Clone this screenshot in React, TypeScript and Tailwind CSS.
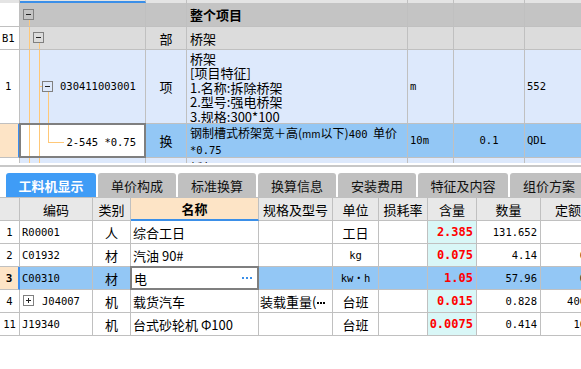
import React from 'react';

const mono = "font-['DejaVu_Sans_Mono','Noto_Sans_CJK_SC',monospace] text-[10.5px]";
const topCols = 'grid grid-cols-[20px_126px_41px_221px_46px_71px_57px]';
const botCols = 'grid grid-cols-[20px_73px_38px_128px_74px_46px_49px_49px_64px_68px]';
const cell = 'border-r border-b border-[#c0c0c0] relative overflow-hidden';

function Box({ plus, className }: { plus?: boolean; className: string }) {
  return (
    <span className={`absolute w-[11px] h-[11px] border border-[#808080] flex items-center justify-center ${className}`}>
      <span className="w-[5px] h-px bg-[#222]" />
      {plus && <span className="absolute w-px h-[5px] bg-[#222]" />}
    </span>
  );
}

function Dots() {
  return (
    <span className="flex gap-[2px]">
      <span className="w-[2px] h-[2px] bg-[#3b8fe8]" />
      <span className="w-[2px] h-[2px] bg-[#3b8fe8]" />
      <span className="w-[2px] h-[2px] bg-[#3b8fe8]" />
    </span>
  );
}

function TopGrid() {
  return (
    <div className="h-[163px] overflow-hidden">
      {/* header strip */}
      <div className={`${topCols} h-[3px]`}>
        <div className="bg-[#e4e4e4] border-r border-[#c0c0c0]" />
        <div className="bg-[#e4e4e4] border-r border-[#c0c0c0] border-b-2 border-b-[#3b8fe8]" />
        <div className="bg-[#e4e4e4] border-r border-[#c0c0c0]" />
        <div className="bg-[#e4e4e4] border-r border-[#c0c0c0]" />
        <div className="bg-[#e4e4e4] border-r border-[#c0c0c0]" />
        <div className="bg-[#e4e4e4] border-r border-[#c0c0c0]" />
        <div className="bg-[#e4e4e4]" />
      </div>

      {/* 整个项目 */}
      <div className={`${topCols} h-[24px] bg-[#c4c4c4]`}>
        <div className={`${cell} bg-white`} />
        <div className={cell}>
          <Box className="left-[3px] top-[6px]" />
          <span className="absolute left-[9px] top-[17px] bottom-0 w-px bg-[#ffc878]" />
        </div>
        <div className={cell} />
        <div className={`${cell} flex items-center pl-[3px] font-bold`}>整个项目</div>
        <div className={cell} />
        <div className={cell} />
        <div className={cell} />
      </div>

      {/* B1 */}
      <div className={`${topCols} h-[23px] bg-[#dcdcdc]`}>
        <div className={`${cell} bg-white flex items-center pl-[2px] ${mono}`}>B1</div>
        <div className={cell}>
          <span className="absolute left-[9px] top-0 bottom-0 w-px bg-[#ffc878]" />
          <Box className="left-[13px] top-[5px]" />
          <span className="absolute left-[19px] top-[16px] bottom-0 w-px bg-[#ffc878]" />
        </div>
        <div className={`${cell} flex items-center justify-center`}>部</div>
        <div className={`${cell} flex items-center pl-[3px]`}>桥架</div>
        <div className={cell} />
        <div className={cell} />
        <div className={cell} />
      </div>

      {/* 030411003001 */}
      <div className={`${topCols} h-[74px] bg-[#dde9fc]`}>
        <div className={`${cell} bg-white flex items-center pl-[5px] ${mono}`}>1</div>
        <div className={cell}>
          <span className="absolute left-[9px] top-0 bottom-0 w-px bg-[#ffc878]" />
          <span className="absolute left-[19px] top-0 bottom-0 w-px bg-[#ffc878]" />
          <span className="absolute left-[19px] top-[36px] w-[4px] h-px bg-[#ffc878]" />
          <Box className="left-[22px] top-[31px]" />
          <span className="absolute left-[28px] top-[42px] bottom-0 w-px bg-[#ffc878]" />
          <span className={`absolute left-[40px] top-[30px] ${mono} leading-[13px]`}>030411003001</span>
        </div>
        <div className={`${cell} flex items-center justify-center`}>项</div>
        <div className={`${cell} pl-[3px] pt-[2px] leading-[14.4px] whitespace-nowrap`}>
          <div>桥架</div>
          <div>[项目特征]</div>
          <div>1.名称:拆除桥架</div>
          <div>2.型号:强电桥架</div>
          <div>3.规格:300*100</div>
        </div>
        <div className={`${cell} flex items-center pl-[2px] ${mono}`}>m</div>
        <div className={cell} />
        <div className={`${cell} flex items-center pl-[2px] ${mono}`}>552</div>
      </div>

      {/* 2-545 *0.75 (selected) */}
      <div className={`${topCols} h-[34px] bg-[#93c7f5]`}>
        <div className="border-r-2 border-b border-r-[#3d8ef0] border-b-[#c0c0c0] bg-[#fde4c6]" />
        <div className="relative bg-white border-2 border-[#7f7f7f] -ml-[1px] -mt-[1px] h-[35px]">
          <span className="absolute left-[8px] top-0 bottom-0 w-px bg-[#ffc878]" />
          <span className="absolute left-[18px] top-0 bottom-0 w-px bg-[#ffc878]" />
          <span className="absolute left-[27px] top-0 h-[17px] w-px bg-[#ffc878]" />
          <span className="absolute left-[27px] top-[17px] w-[16px] h-px bg-[#ffc878]" />
          <span className={`absolute right-[8px] top-[11px] ${mono} leading-[13px]`}>2-545 *0.75</span>
        </div>
        <div className={`${cell} flex items-center justify-center`}>换</div>
        <div className={`${cell} pl-[3px] pt-[1px] leading-[16px] whitespace-pre`}>
          <div className="text-[12px]">
            钢制槽式桥架宽＋高(<span className="text-[10px]">mm</span>以下)<span className={mono}>400</span>{'  '}单价
          </div>
          <div className={mono}>*0.75</div>
        </div>
        <div className={`${cell} flex items-center pl-[2px] ${mono}`}>10m</div>
        <div className={`${cell} flex items-center justify-center ${mono}`}>0.1</div>
        <div className={`${cell} flex items-center pl-[2px] ${mono}`}>QDL</div>
      </div>

      {/* partial next row */}
      <div className={`${topCols} h-[8px] bg-[#dde9fc]`}>
        <div className={`${cell} bg-white`} />
        <div className={cell}>
          <span className="absolute left-[9px] top-0 bottom-0 w-px bg-[#ffc878]" />
          <span className="absolute left-[19px] top-0 bottom-0 w-px bg-[#ffc878]" />
        </div>
        <div className={cell} />
        <div className={`${cell} pl-[3px] pt-[3px]`}>桥架</div>
        <div className={cell} />
        <div className={cell} />
        <div className={cell} />
      </div>
    </div>
  );
}

const tabs = [
  { label: '工料机显示', w: 'w-[90px]', active: true },
  { label: '单价构成', w: 'w-[78px]' },
  { label: '标准换算', w: 'w-[78px]' },
  { label: '换算信息', w: 'w-[78px]' },
  { label: '安装费用', w: 'w-[78px]' },
  { label: '特征及内容', w: 'w-[90px]' },
  { label: '组价方案', w: 'w-[78px]' },
];

function Tabs() {
  return (
    <div className="flex gap-[2px] pl-[6px] pt-[6px] h-[30px] overflow-hidden">
      {tabs.map((t) => (
        <div
          key={t.label}
          className={`${t.w} shrink-0 h-[24px] rounded-t-[3px] flex items-center justify-center ${
            t.active ? 'bg-[#3f9cf6] text-white font-bold' : 'bg-[#c0c0c0] text-[#111]'
          }`}
        >
          {t.label}
        </div>
      ))}
    </div>
  );
}

interface Row {
  n: string;
  code: string;
  type: string;
  name: string;
  spec?: string;
  unit: string;
  qty: string;
  amt: string;
  price: string;
  sel?: boolean;
  plus?: boolean;
}

const rows: Row[] = [
  { n: '1', code: 'R00001', type: '人', name: '综合工日', unit: '工日', qty: '2.385', amt: '131.652', price: '' },
  { n: '2', code: 'C01932', type: '材', name: '汽油 90#', unit: 'kg', qty: '0.075', amt: '4.14', price: '6.88' },
  { n: '3', code: 'C00310', type: '材', name: '电', unit: 'kw・h', qty: '1.05', amt: '57.96', price: '0.86', sel: true },
  { n: '4', code: 'J04007', type: '机', name: '载货汽车', spec: '装载重量(', unit: '台班', qty: '0.015', amt: '0.828', price: '400.31', plus: true },
  { n: '11', code: 'J19340', type: '机', name: '台式砂轮机 Φ100', unit: '台班', qty: '0.0075', amt: '0.414', price: '16.95' },
];

function MaterialTable() {
  return (
    <div className="w-[581px] overflow-hidden">
      <div className={`${botCols} w-[609px] h-[24px] bg-[#e8e8e8] border-t border-[#c0c0c0]`}>
        <div className={cell} />
        <div className={`${cell} flex items-center justify-center`}>编码</div>
        <div className={`${cell} flex items-center justify-center`}>类别</div>
        <div className="relative border-r border-[#c0c0c0] border-b-2 border-b-[#3b8fe8] bg-[#fde4c6] flex items-center justify-center font-bold">名称</div>
        <div className={`${cell} flex items-center justify-center`}>规格及型号</div>
        <div className={`${cell} flex items-center justify-center`}>单位</div>
        <div className={`${cell} flex items-center justify-center`}>损耗率</div>
        <div className={`${cell} flex items-center justify-center`}>含量</div>
        <div className={`${cell} flex items-center justify-center`}>数量</div>
        <div className={`${cell} flex items-center justify-center`}>定额价</div>
      </div>
      {rows.map((r) => (
        <div key={r.n} className={`${botCols} w-[609px] h-[23px] ${r.sel ? 'bg-[#93c7f5]' : 'bg-white'}`}>
          {r.sel ? (
            <div className="border-r-2 border-b border-r-[#3d8ef0] border-b-[#c0c0c0] bg-[#fde4c6] flex items-center justify-center font-bold font-['DejaVu_Sans_Mono',monospace] text-[11px]">
              {r.n}
            </div>
          ) : (
            <div className={`${cell} flex items-center justify-center ${mono}`}>{r.n}</div>
          )}
          <div className={`${cell} flex items-center pl-[2px] ${mono}`}>
            {r.plus ? (
              <>
                <Box plus className="left-[3px] top-[5px]" />
                <span className="pl-[20px]">{r.code}</span>
              </>
            ) : (
              r.code
            )}
          </div>
          <div className={`${cell} flex items-center justify-center`}>{r.type}</div>
          {r.sel ? (
            <div className="relative bg-white border-2 border-[#7f7f7f] -ml-[1px] -mt-[1px] h-[24px] flex items-center justify-between pl-[2px] pr-[5px]">
              <span>{r.name}</span>
              <Dots />
            </div>
          ) : (
            <div className={`${cell} flex items-center pl-[2px] whitespace-nowrap`}>{r.name}</div>
          )}
          <div className={`${cell} flex items-center pl-[1px] whitespace-nowrap`}>
            {r.spec && (
              <>
                <span>{r.spec}</span>
                <span className="ml-[1px] mt-[4px] flex gap-[1px]">
                  <span className="w-[2px] h-[2px] bg-black" />
                  <span className="w-[2px] h-[2px] bg-black" />
                  <span className="w-[2px] h-[2px] bg-black" />
                </span>
              </>
            )}
          </div>
          <div className={`${cell} flex items-center justify-center ${r.unit === 'kg' ? mono : ''}`}>
            {r.unit === 'kw・h' ? <span className={mono}>kw<span className="font-['Noto_Sans_CJK_SC']">・</span>h</span> : r.unit}
          </div>
          <div className={cell} />
          <div className={`${cell} flex items-center justify-end pr-[3px] ${r.sel ? '' : 'bg-[#d9f7f7]'} font-['DejaVu_Sans_Mono',monospace] text-[12px] font-bold text-[#ff0000]`}>
            {r.qty}
          </div>
          <div className={`${cell} flex items-center justify-end pr-[3px] ${mono}`}>{r.amt}</div>
          <div className={`${cell} flex items-center justify-end pr-[3px] ${mono}`}>{r.price}</div>
        </div>
      ))}
    </div>
  );
}

export default function App() {
  return (
    <div className="w-[581px] h-[369px] overflow-hidden bg-white text-black font-['Noto_Sans_CJK_SC',sans-serif] text-[13px] leading-none">
      <TopGrid />
      <div className="h-[2px]" />
      <div className="h-[2px] bg-[#c8c8c8]" />
      <Tabs />
      <MaterialTable />
    </div>
  );
}
